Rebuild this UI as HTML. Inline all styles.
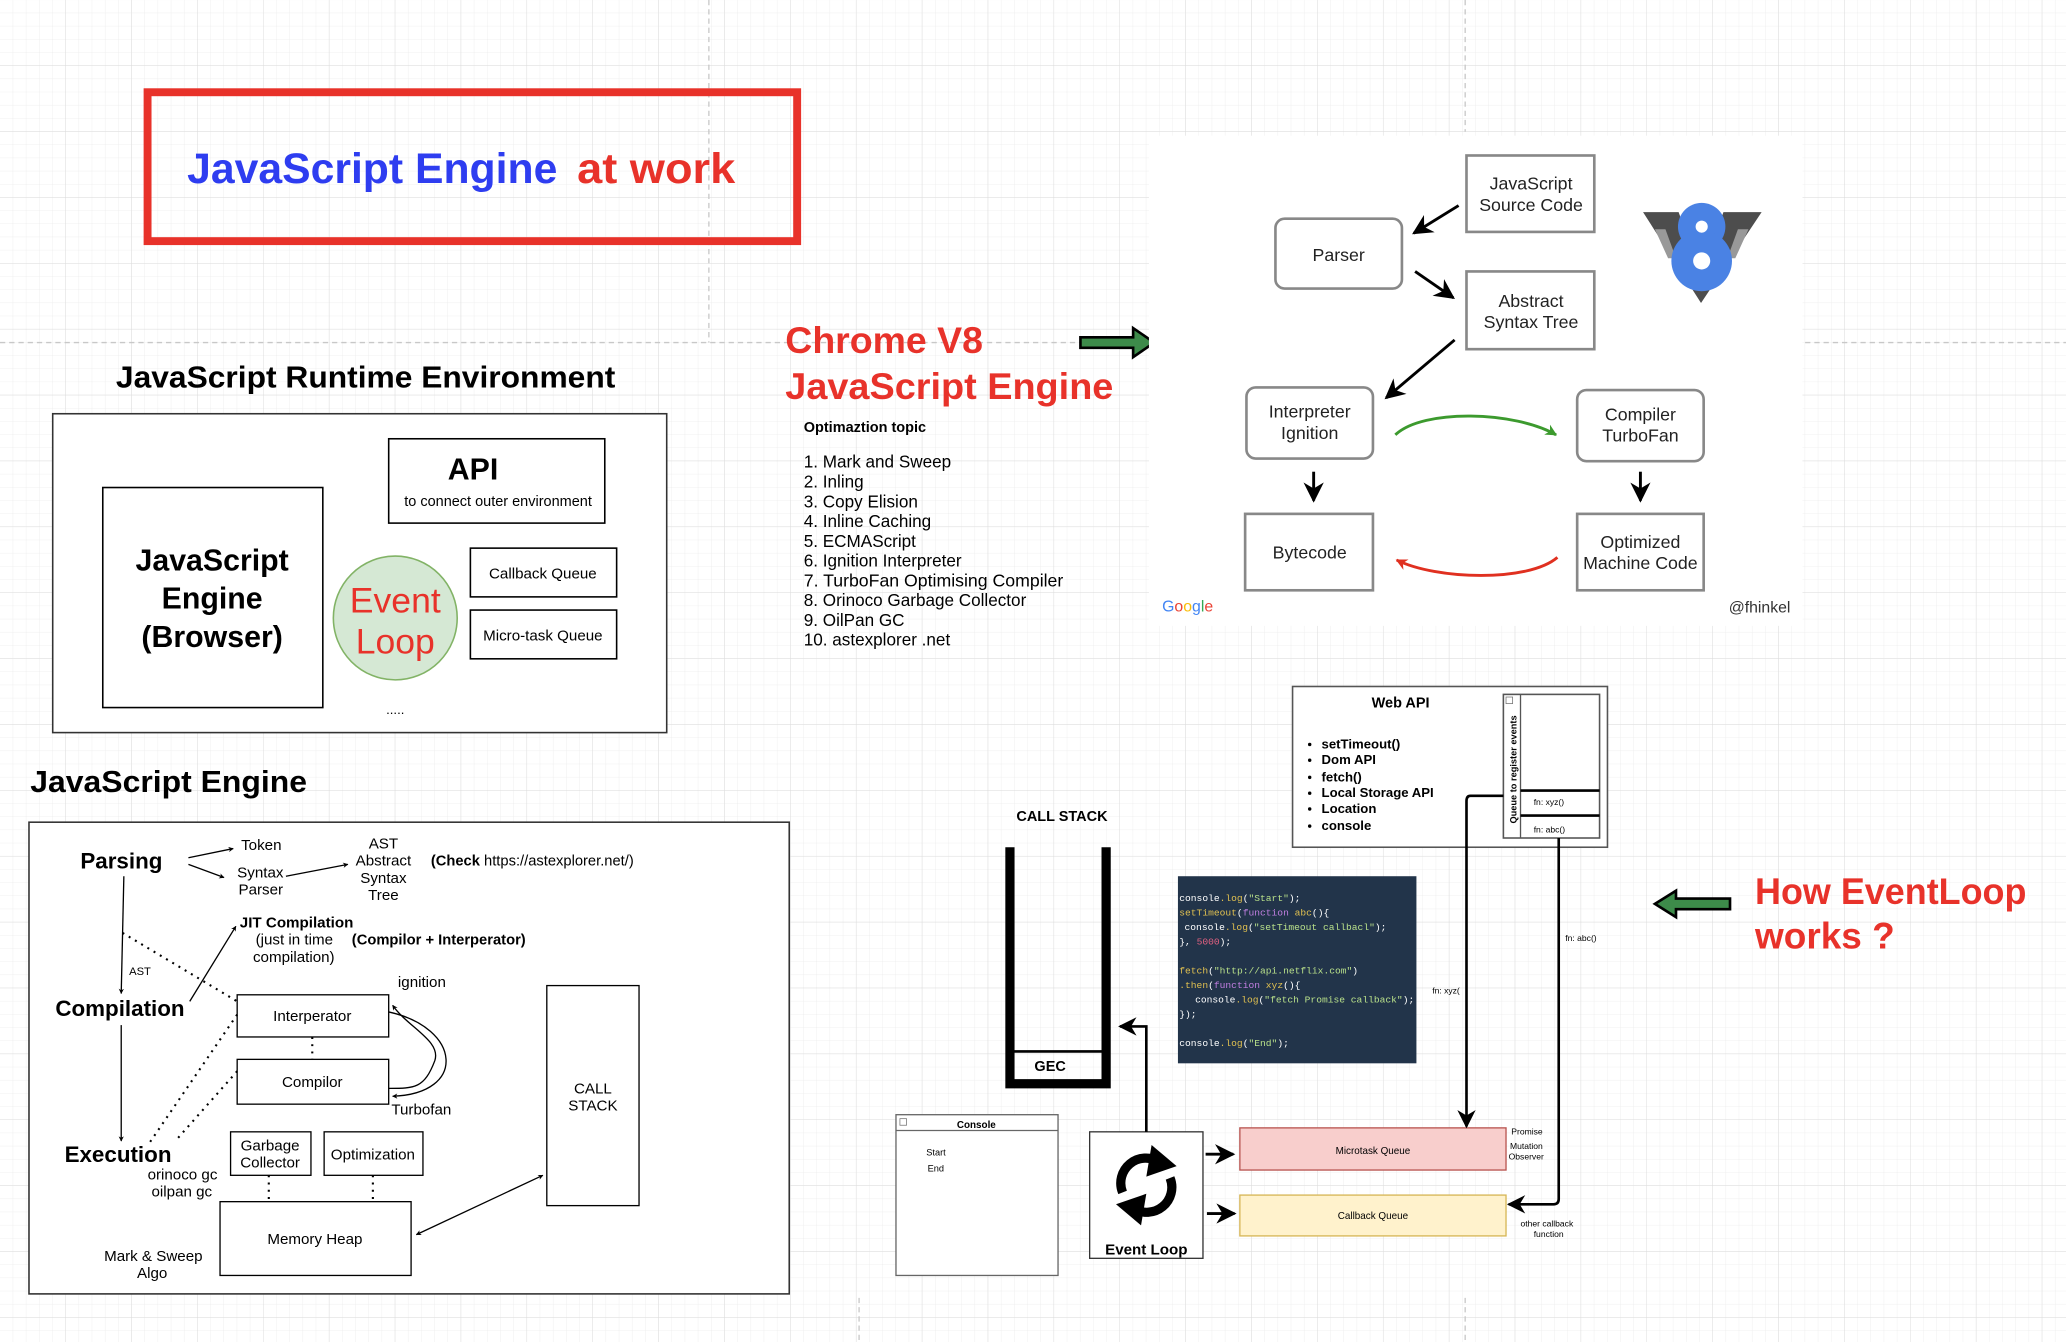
<!DOCTYPE html>
<html><head><meta charset="utf-8"><style>
html,body{margin:0;padding:0;background:#fff;}
svg{display:block;}
text{font-family:"Liberation Sans",Arial,sans-serif;}
svg .mono, svg .mono tspan{font-family:"Liberation Mono","DejaVu Sans Mono",monospace;}
</style></head><body>
<svg width="2066" height="1342" viewBox="0 0 1568 1018.5" xmlns="http://www.w3.org/2000/svg">
<defs>
<pattern id="g" width="10" height="10" patternUnits="userSpaceOnUse"><path d="M10 0V10H0" fill="none" stroke="#ececec" stroke-width="0.6"/></pattern>
<pattern id="G" width="50" height="50" patternUnits="userSpaceOnUse"><path d="M50 0V50H0" fill="none" stroke="#dcdcdc" stroke-width="0.7"/></pattern>
<marker id="a" viewBox="0 0 10 10" refX="9" refY="5" markerWidth="7" markerHeight="7" orient="auto-start-reverse"><path d="M0 0L10 5L0 10L3 5z" fill="#000"/></marker>
<marker id="ab" viewBox="0 0 10 10" refX="9" refY="5" markerWidth="4" markerHeight="4" orient="auto-start-reverse"><path d="M0 0L10 5L0 10L3 5z" fill="#000"/></marker>
<marker id="ag" viewBox="0 0 10 10" refX="9" refY="5" markerWidth="4" markerHeight="4" orient="auto"><path d="M0 0L10 5L0 10L3 5z" fill="#3c9a2e"/></marker>
<marker id="ar" viewBox="0 0 10 10" refX="9" refY="5" markerWidth="4" markerHeight="4" orient="auto"><path d="M0 0L10 5L0 10L3 5z" fill="#e03020"/></marker>
</defs>
<rect width="1568" height="1019" fill="url(#g)"/>
<rect width="1568" height="1019" fill="url(#G)"/>
<g stroke="#c8c8c8" stroke-dasharray="4 3" stroke-width="1">
<path d="M538 0V260M0 260H870M1112 0V100M1370 260H1568M652 985V1019M1112 985V1019"/>
</g>

<!-- Title -->
<rect x="112" y="70" width="493" height="113" fill="none" stroke="#e8322a" stroke-width="6"/>
<text x="142" y="139" font-family="DejaVu Sans" font-weight="bold" font-size="32" fill="#2e3df0" textLength="281" lengthAdjust="spacingAndGlyphs">JavaScript Engine</text>
<text x="438" y="139" font-family="DejaVu Sans" font-weight="bold" font-size="32" fill="#e8322a" textLength="120" lengthAdjust="spacingAndGlyphs">at work</text>

<!-- Runtime env -->
<text x="88" y="294" font-size="23" font-weight="bold" textLength="379" lengthAdjust="spacingAndGlyphs">JavaScript Runtime Environment</text>
<rect x="40" y="314" width="466" height="242" fill="#fff" stroke="#333" stroke-width="1.2"/>
<rect x="295" y="333" width="164" height="64" fill="#fff" stroke="#000" stroke-width="1.2"/>
<text x="359" y="364" text-anchor="middle" font-size="23" font-weight="bold">API</text>
<text x="378" y="384" text-anchor="middle" font-size="11">to connect outer environment</text>
<rect x="78" y="370" width="167" height="167" fill="#fff" stroke="#000" stroke-width="1.2"/>
<g font-size="23" font-weight="bold" text-anchor="middle"><text x="161" y="433">JavaScript</text><text x="161" y="462">Engine</text><text x="161" y="491">(Browser)</text></g>
<circle cx="300" cy="469" r="47" fill="#d5e8d4" stroke="#82b366" stroke-width="1.2"/>
<g font-family="DejaVu Sans" font-size="27" fill="#e8322a" text-anchor="middle"><text x="300" y="465">Event</text><text x="300" y="496">Loop</text></g>
<rect x="357" y="416" width="111" height="37" fill="#fff" stroke="#000" stroke-width="1.2"/>
<text x="412" y="439" text-anchor="middle" font-size="11.5">Callback Queue</text>
<rect x="357" y="463" width="111" height="37" fill="#fff" stroke="#000" stroke-width="1.2"/>
<text x="412" y="486" text-anchor="middle" font-size="11.5">Micro-task Queue</text>
<text x="300" y="542" text-anchor="middle" font-size="10">.....</text>

<!-- JS Engine -->
<text x="23" y="601" font-size="23" font-weight="bold" textLength="210" lengthAdjust="spacingAndGlyphs">JavaScript Engine</text>
<rect x="22" y="624" width="577" height="358" fill="#fff" stroke="#333" stroke-width="1.2"/>
<g font-size="11.5">
<text x="61" y="659" font-size="17" font-weight="bold">Parsing</text>
<text x="183" y="645">Token</text>
<text x="180" y="666">Syntax</text><text x="181" y="679">Parser</text>
<g text-anchor="middle"><text x="291" y="644">AST</text><text x="291" y="657">Abstract</text><text x="291" y="670">Syntax</text><text x="291" y="683">Tree</text></g>
<text x="327" y="657" textLength="154" lengthAdjust="spacingAndGlyphs"><tspan font-weight="bold">(Check</tspan> https://astexplorer.net/)</text>
<text x="182" y="704" font-weight="bold">JIT Compilation</text>
<text x="194" y="717">(just in time</text><text x="192" y="730">compilation)</text>
<text x="267" y="717" font-weight="bold" textLength="132" lengthAdjust="spacingAndGlyphs">(Compilor + Interperator)</text>
<text x="42" y="771" font-size="17" font-weight="bold">Compilation</text>
<text x="98" y="740" font-size="8.5">AST</text>
<text x="49" y="882" font-size="17" font-weight="bold">Execution</text>
<text x="112" y="895">orinoco gc</text><text x="115" y="908">oilpan gc</text>
<text x="302" y="749">ignition</text><text x="297" y="846">Turbofan</text>
<text x="79" y="957">Mark &amp; Sweep</text><text x="104" y="970">Algo</text>
<rect x="180" y="755" width="115" height="32" fill="#fff" stroke="#000"/><text x="237" y="775" text-anchor="middle">Interperator</text>
<rect x="180" y="804" width="115" height="34" fill="#fff" stroke="#000"/><text x="237" y="825" text-anchor="middle">Compilor</text>
<rect x="175" y="859" width="61" height="33" fill="#fff" stroke="#000"/><text x="205" y="873" text-anchor="middle">Garbage</text><text x="205" y="886" text-anchor="middle">Collector</text>
<rect x="246" y="859" width="75" height="33" fill="#fff" stroke="#000"/><text x="283" y="880" text-anchor="middle">Optimization</text>
<rect x="167" y="912" width="145" height="56" fill="#fff" stroke="#000"/><text x="239" y="944" text-anchor="middle">Memory Heap</text>
<rect x="415" y="748" width="70" height="167" fill="#fff" stroke="#000"/><text x="450" y="830" text-anchor="middle">CALL</text><text x="450" y="843" text-anchor="middle">STACK</text>
</g>
<g stroke="#000" stroke-width="1" fill="none">
<path d="M143 651L177 644" marker-end="url(#ab)"/><path d="M143 656L170 666" marker-end="url(#ab)"/>
<path d="M217 665L264 656" marker-end="url(#ab)"/>
<path d="M94 665L92 754" marker-end="url(#ab)"/><path d="M92 778L92 866" marker-end="url(#ab)"/>
<path d="M144 760L179 703" marker-end="url(#ab)"/>
<path d="M295 826C315 826 322 826 330 805C335 790 310 780 298 763" marker-end="url(#ab)"/>
<path d="M295 768C350 780 355 830 298 832" marker-end="url(#ab)"/>
<path d="M316 937L412 892" marker-end="url(#ab)" marker-start="url(#ab)"/>
<g stroke-dasharray="1.5 4" stroke-width="1.6">
<path d="M93 708L180 760M180 770L113 868M180 813L133 866M237 787V804M204 892V912M283 892V912"/>
</g>
</g>

<!-- Chrome V8 -->
<g font-family="DejaVu Sans" font-weight="bold" font-size="28" fill="#e8322a"><text x="596" y="268" textLength="150" lengthAdjust="spacingAndGlyphs">Chrome V8</text><text x="596" y="303" textLength="249" lengthAdjust="spacingAndGlyphs">JavaScript Engine</text></g>
<path d="M820 256H860V249L876 260L860 271V264H820Z" fill="#3d8b4a" stroke="#000" stroke-width="2"/>
<text x="610" y="328" font-size="11" font-weight="bold">Optimaztion topic</text>
<g font-size="13"><text x="610" y="355">1. Mark and Sweep</text><text x="610" y="370">2. Inling</text><text x="610" y="385">3. Copy Elision</text><text x="610" y="400">4. Inline Caching</text><text x="610" y="415">5. ECMAScript</text><text x="610" y="430">6. Ignition Interpreter</text><text x="610" y="445" textLength="197" lengthAdjust="spacingAndGlyphs">7. TurboFan Optimising Compiler</text><text x="610" y="460">8. Orinoco Garbage Collector</text><text x="610" y="475">9. OilPan GC</text><text x="610" y="490">10. astexplorer .net</text></g>

<!-- V8 panel -->
<rect x="872" y="103" width="496" height="372" fill="#fff"/>
<g fill="#fff" stroke="#888" stroke-width="2">
<rect x="1113" y="118" width="97" height="58"/>
<rect x="968" y="166" width="96" height="53" rx="7"/>
<rect x="1113" y="206" width="97" height="59"/>
<rect x="946" y="294" width="96" height="54" rx="7"/>
<rect x="1197" y="296" width="96" height="54" rx="7"/>
<rect x="945" y="390" width="97" height="58"/>
<rect x="1197" y="390" width="96" height="58"/>
</g>
<g font-size="13.5" text-anchor="middle" fill="#222">
<text x="1162" y="144">JavaScript</text><text x="1162" y="160">Source Code</text>
<text x="1016" y="198">Parser</text>
<text x="1162" y="233">Abstract</text><text x="1162" y="249">Syntax Tree</text>
<text x="994" y="317">Interpreter</text><text x="994" y="333">Ignition</text>
<text x="1245" y="319">Compiler</text><text x="1245" y="335">TurboFan</text>
<text x="994" y="424">Bytecode</text>
<text x="1245" y="416">Optimized</text><text x="1245" y="432">Machine Code</text>
</g>
<g stroke="#000" stroke-width="2.2" fill="none">
<path d="M1107 156L1073 177" marker-end="url(#a)"/>
<path d="M1074 206L1103 226" marker-end="url(#a)"/>
<path d="M1104 258L1052 302" marker-end="url(#a)"/>
<path d="M997 358V380" marker-end="url(#a)"/>
<path d="M1245 358V380" marker-end="url(#a)"/>
</g>
<path d="M1059 330C1080 310 1150 312 1181 330" stroke="#3c9a2e" stroke-width="2.2" fill="none" marker-end="url(#ag)"/>
<path d="M1182 423C1160 442 1090 440 1060 425" stroke="#e03020" stroke-width="2.2" fill="none" marker-end="url(#ar)"/>
<text x="882" y="464" font-size="12"><tspan fill="#4285f4">G</tspan><tspan fill="#ea4335">o</tspan><tspan fill="#fbbc05">o</tspan><tspan fill="#4285f4">g</tspan><tspan fill="#34a853">l</tspan><tspan fill="#ea4335">e</tspan></text>
<text x="1312" y="465" font-size="12" fill="#333">@fhinkel</text>
<!-- V8 logo -->
<path d="M1247 161H1274L1291 208L1308 161H1337L1291 230Z" fill="#4d4d4d"/>
<path d="M1256 174H1264L1272 196L1266 196ZM1327 174H1319L1311 196L1317 196Z" fill="#999"/>
<circle cx="1291.5" cy="172" r="18" fill="#4a82e4"/>
<circle cx="1291.5" cy="198" r="23" fill="#4a82e4"/>
<circle cx="1291.5" cy="172" r="4.6" fill="#fff"/>
<circle cx="1291.5" cy="198" r="6.5" fill="#fff"/>

<!-- Event loop diagram -->
<rect x="981" y="521" width="239" height="122" fill="#fff" stroke="#555" stroke-width="1.2"/>
<text x="1063" y="537" font-size="11" font-weight="bold" text-anchor="middle">Web API</text>
<g font-size="10" font-weight="bold"><text x="1003" y="568">setTimeout()</text><text x="1003" y="580">Dom API</text><text x="1003" y="593">fetch()</text><text x="1003" y="605">Local Storage API</text><text x="1003" y="617">Location</text><text x="1003" y="630">console</text></g>
<g fill="#000"><circle cx="994" cy="565" r="1.3"/><circle cx="994" cy="577" r="1.3"/><circle cx="994" cy="590" r="1.3"/><circle cx="994" cy="602" r="1.3"/><circle cx="994" cy="614" r="1.3"/><circle cx="994" cy="627" r="1.3"/></g>
<rect x="1141" y="527" width="73" height="109" fill="#fff" stroke="#555" stroke-width="1.2"/>
<path d="M1154 527V636" stroke="#555" stroke-width="1"/>
<rect x="1143" y="529" width="5" height="5" fill="none" stroke="#777" stroke-width="0.6"/>
<text transform="translate(1151 625) rotate(-90)" font-size="7" font-weight="bold">Queue to register events</text>
<path d="M1154 600H1214M1154 619H1214" stroke="#000" stroke-width="2"/>
<text x="1164" y="611" font-size="6.5">fn: xyz()</text><text x="1164" y="632" font-size="6.5">fn: abc()</text>
<text x="806" y="623" font-size="11" font-weight="bold" text-anchor="middle">CALL STACK</text>
<path d="M766.5 643V822.5H839.5V643" stroke="#000" stroke-width="7" fill="none"/>
<path d="M766 798H840" stroke="#000" stroke-width="2"/>
<text x="797" y="813" font-size="11" font-weight="bold" text-anchor="middle">GEC</text>
<rect x="894" y="665" width="181" height="142" fill="#22344a"/>
<g class="mono" font-size="7.3" fill="#fff">
<text class="mono" x="895" y="684">console<tspan fill="#e0c050">.log</tspan>(<tspan fill="#b8e08a">"Start"</tspan>);</text>
<text class="mono" x="895" y="695" fill="#e0c050">setTimeout<tspan fill="#fff">(</tspan><tspan fill="#c07ee0">function</tspan> abc<tspan fill="#fff">(){</tspan></text>
<text class="mono" x="899" y="706">console<tspan fill="#e0c050">.log</tspan>(<tspan fill="#b8e08a">"setTimeout callbacl"</tspan>);</text>
<text class="mono" x="895" y="717">}, <tspan fill="#e06080">5000</tspan>);</text>
<text class="mono" x="895" y="739" fill="#e0c050">fetch<tspan fill="#fff">(</tspan><tspan fill="#b8e08a">"http://api.netflix.com"</tspan><tspan fill="#fff">)</tspan></text>
<text class="mono" x="895" y="750" fill="#e0c050">.then<tspan fill="#fff">(</tspan><tspan fill="#c07ee0">function</tspan> xyz<tspan fill="#fff">(){</tspan></text>
<text class="mono" x="907" y="761">console<tspan fill="#e0c050">.log</tspan>(<tspan fill="#b8e08a">"fetch Promise callback"</tspan>);</text>
<text class="mono" x="895" y="772">});</text>
<text class="mono" x="895" y="794">console<tspan fill="#e0c050">.log</tspan>(<tspan fill="#b8e08a">"End"</tspan>);</text>
</g>
<rect x="680" y="846" width="123" height="122" fill="#fff" stroke="#666" stroke-width="1"/>
<path d="M680 858H803" stroke="#666"/>
<rect x="683" y="849" width="5" height="5" fill="none" stroke="#777" stroke-width="0.6"/>
<text x="741" y="856" font-size="7.5" font-weight="bold" text-anchor="middle">Console</text>
<text x="703" y="877" font-size="7">Start</text><text x="704" y="889" font-size="7">End</text>
<rect x="827" y="859" width="86" height="96" fill="#fff" stroke="#333" stroke-width="1"/>
<text x="870" y="952" font-size="11.5" font-weight="bold" text-anchor="middle">Event Loop</text>
<g fill="none" stroke="#000" stroke-width="7">
<path d="M852 905A19 19 0 0 1 880 882"/>
<path d="M888 894A19 19 0 0 1 860 917"/>
</g>
<path d="M874 869L893 885L870 893Z" fill="#000"/>
<path d="M866 930L847 914L870 906Z" fill="#000"/>
<path d="M870 859V779H850" stroke="#000" stroke-width="2" fill="none" marker-end="url(#a)"/>
<rect x="941" y="856" width="202" height="32" fill="#f8cecc" stroke="#b85450" stroke-width="1"/>
<text x="1042" y="876" font-size="7.5" text-anchor="middle">Microtask Queue</text>
<rect x="941" y="907" width="202" height="31" fill="#fff2cc" stroke="#d6b656" stroke-width="1"/>
<text x="1042" y="925" font-size="7.5" text-anchor="middle">Callback Queue</text>
<path d="M915 876H936" stroke="#000" stroke-width="2.2" marker-end="url(#a)"/>
<path d="M916 921H937" stroke="#000" stroke-width="2.2" marker-end="url(#a)"/>
<path d="M1141 604H1116Q1113 604 1113 608V855" stroke="#000" stroke-width="2" fill="none" marker-end="url(#a)"/>
<path d="M1183 636V910Q1183 914 1179 914H1145" stroke="#000" stroke-width="2" fill="none" marker-end="url(#a)"/>
<g font-size="6.5"><text x="1087" y="754">fn: xyz(</text><text x="1188" y="714">fn: abc()</text>
<text x="1147" y="861">Promise</text><text x="1146" y="872">Mutation</text><text x="1145" y="880">Observer</text>
<text x="1154" y="931">other callback</text><text x="1164" y="939">function</text></g>

<path d="M1313 682H1272V676L1256 686L1272 696V690H1313Z" fill="#3d8b4a" stroke="#000" stroke-width="2"/>
<g font-family="DejaVu Sans" font-weight="bold" font-size="28" fill="#e8322a"><text x="1332" y="686" textLength="206" lengthAdjust="spacingAndGlyphs">How EventLoop</text><text x="1332" y="720" textLength="106" lengthAdjust="spacingAndGlyphs">works ?</text></g>
</svg>
</body></html>
